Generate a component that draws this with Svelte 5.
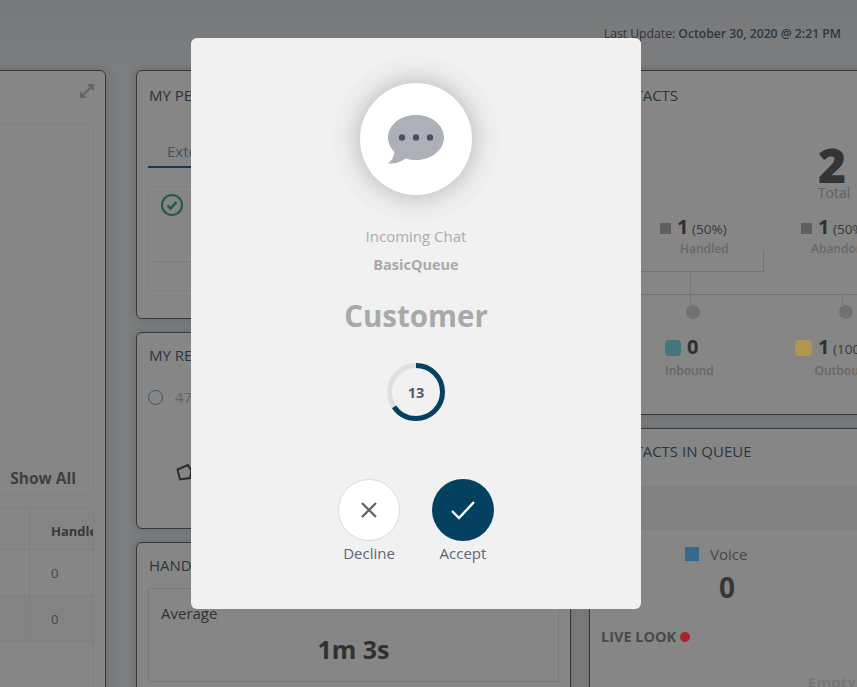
<script>
  const rows = [0, 0];
</script>

<div class="page">
  <header class="top"><span>Last Update: <b>October 30, 2020 @ 2:21 PM</b></span></header>
  <main class="grid">
    <section class="col">
      <div class="card wide">
        <svg class="expand" viewBox="0 0 14 14" width="14" height="14">
          <path d="M0 14V8L6 14ZM14 0V6L8 0Z M3 11L11 3" fill="#c0c0c0" stroke="#c0c0c0" stroke-width="1.800" />
        </svg>
        <div class="chart"><b class="showall">Show All</b></div>
        <div class="table">
          <div class="tr head"><div class="c1"></div><div class="c2">Handled</div></div>
          {#each rows as r, i}
            <div class="tr" class:alt={i === 1}><div class="c1"></div><div class="c2">{r}</div></div>
          {/each}
        </div>
      </div>
    </section>

    <section class="col">
      <div class="card perf">
        <h2>MY PERFORMANCE</h2>
        <div class="tabs"><span>Extensions</span></div>
        <div class="inner">
          <svg viewBox="0 0 24 24" width="24" height="24" class="ok">
            <circle cx="12" cy="12" r="10" fill="none" stroke="#46b08d" stroke-width="2.200" />
            <path d="M7.500 12.500l3 3 6-6.500" fill="none" stroke="#46b08d" stroke-width="2.600" />
          </svg>
          <div class="rule"></div>
        </div>
      </div>
      <div class="card recent">
        <h2>MY RECENT</h2>
        <div class="radio"><i></i><span>47</span></div>
        <svg class="penta" viewBox="0 0 16 17" width="16" height="17">
          <path d="M1.500 5.500L12 1L15.500 7L14 14L4 15.500Z" fill="none" stroke="#55504c" stroke-width="2" />
        </svg>
      </div>
      <div class="card handle">
        <h2>HANDLE TIME</h2>
        <div class="avg"><span>Average</span><b>1m 3s</b></div>
      </div>
    </section>

    <section class="col">
      <div class="card contacts">
        <h2>CONTACTS</h2>
        <div class="total"><b>2</b><span>Total</span></div>
        <div class="tree">
          <div class="stat s1"><div><i class="sq"></i><b>1</b> <em>(50%)</em></div><small>Handled</small></div>
          <div class="stat s2"><div><i class="sq"></i><b>1</b> <em>(50%)</em></div><small>Abandoned</small></div>
          <span class="ln l1"></span><span class="ln l2"></span><span class="ln l3"></span>
          <span class="ln l4"></span><span class="ln l5"></span>
          <span class="dot d1"></span><span class="dot d2"></span>
          <div class="stat s3"><div><i class="sq teal"></i><b>0</b></div><small>Inbound</small></div>
          <div class="stat s4"><div><i class="sq yellow"></i><b>1</b> <em>(100%)</em></div><small>Outbound</small></div>
        </div>
      </div>
      <div class="card queue">
        <h2>CONTACTS IN QUEUE</h2>
        <div class="band"></div>
        <div class="voice"><i></i><span>Voice</span></div>
        <b class="zero">0</b>
        <div class="live"><b>LIVE LOOK</b><i></i></div>
        <div class="liverule"></div>
        <b class="empty">Empty</b>
      </div>
    </section>
  </main>
</div>

<div class="overlay">
  <div class="modal">
    <div class="halo">
      <div class="disc">
        <svg viewBox="0 0 56 50" width="56" height="50">
          <path d="M28 0C43.500 0 56 10 56 22.500C56 35 43.500 45 28 45C24.500 45 21 44.500 18 43.500C13 47 7 49 0 48.500C3.500 46 6 41.500 6.500 37C2.500 33 0 28 0 22.500C0 10 12.500 0 28 0Z" fill="#adb0b9" />
          <circle cx="14" cy="22.500" r="3.200" fill="#4b5165" />
          <circle cx="28" cy="22.500" r="3.200" fill="#4b5165" />
          <circle cx="42" cy="22.500" r="3.200" fill="#4b5165" />
        </svg>
      </div>
    </div>
    <p class="kind">Incoming Chat</p>
    <p class="queue-name">BasicQueue</p>
    <h1>Customer</h1>
    <div class="timer">
      <svg viewBox="0 0 58 58" width="58" height="58">
        <circle cx="29" cy="29" r="26.500" fill="none" stroke="#dfdfdf" stroke-width="5" />
        <circle cx="29" cy="29" r="26.500" fill="none" stroke="#04405f" stroke-width="5" pathLength="100" stroke-dasharray="65.500 100" transform="rotate(-90 29 29)" />
      </svg>
      <b>13</b>
    </div>
    <div class="actions">
      <div class="action">
        <button class="round decline" aria-label="Decline">
          <svg viewBox="0 0 18 18" width="18" height="18"><path d="M2 2L16 16M16 2L2 16" stroke="#5b6072" stroke-width="2.200" fill="none" /></svg>
        </button>
        <span>Decline</span>
      </div>
      <div class="action">
        <button class="round accept" aria-label="Accept">
          <svg viewBox="0 0 26 20" width="26" height="20"><path d="M2 11L9 18L24 2" stroke="#fff" stroke-width="2.400" fill="none" /></svg>
        </button>
        <span>Accept</span>
      </div>
    </div>
  </div>
</div>

<style>
  :global(body) {
    margin: 0;
    font-family: "Open Sans", "Noto Sans", sans-serif;
    background: #e6eaee;
    overflow: hidden;
  }
  .page {
    width: 857px;
    height: 687px;
    overflow: hidden;
    background: linear-gradient(#dfe3e7, #eceef0 70px);
  }
  .top {
    height: 70px;
    box-sizing: border-box;
    padding: 26px 16px 0 0;
    text-align: right;
    font-size: 12.200px;
    line-height: 16px;
    color: #5d6670;
  }
  .top b { font-weight: 600; }
  .grid {
    display: grid;
    grid-template-columns: 200px 435px 500px;
    margin-left: -94px;
    column-gap: 30px;
  }
  .grid .col:last-child { margin-left: -12px; }
  .col { display: flex; flex-direction: column; gap: 13px; }
  .card {
    position: relative;
    box-sizing: border-box;
    background: #fdfdfd;
    border: 1px solid #616c74;
    border-radius: 6px;
    box-shadow: 0 0 12px rgba(0, 0, 0, .18);
  }
  h2 {
    margin: 0;
    font-size: 15px;
    font-weight: 500;
    line-height: 18px;
    color: #50687b;
    padding: 15px 0 2px 12px;
  }
  .wide { height: 650px; padding: 52px 11px 0 0; }
  .expand { position: absolute; right: 11px; top: 13px; }
  .chart {
    height: 370px;
    border: 1px solid #f1f1f1;
    border-left: 0;
    position: relative;
  }
  .showall {
    position: absolute;
    right: 17px;
    bottom: 5px;
    font-size: 15.500px;
    line-height: 22px;
    color: #77777b;
  }
  .table { margin-top: 12px; border: 1px solid #f1f1f1; border-left: 0; height: 200px; overflow: hidden; }
  .tr { display: flex; height: 45px; border-bottom: 1px solid #eeeeee; font-size: 13px; color: #888; }
  .tr.head { height: 41px; background: #fbfbfb; font-weight: 700; color: #6a6a70; }
  .tr.alt { background: #f8f8f8; }
  .c1 { flex: none; width: 122px; border-right: 1px solid #eeeeee; }
  .c2 { padding: 14px 0 0 21px; overflow: hidden; white-space: nowrap; }

  .perf { height: 249px; padding: 0 11px; }
  .perf h2 { padding-left: 1px; }
  .tabs {
    margin-top: 25px;
    height: 35px;
    border-bottom: 2px solid #2f6b85;
    font-size: 15px;
    padding-left: 19px;
    line-height: 40px;
    color: #7d9ec9;
  }
  .inner {
    margin-top: 18px;
    height: 103px;
    border: 1px solid #f0f0f0;
    border-radius: 6px;
    position: relative;
  }
  .ok { position: absolute; left: 11px; top: 6px; }
  .rule { position: absolute; left: 4px; right: 4px; top: 74px; border-top: 1px solid #e8e8e8; }

  .recent { height: 197px; padding: 0 11px; }
  .recent h2 { padding-left: 1px; padding-top: 13px; }
  .radio { display: flex; align-items: center; gap: 12px; margin-top: 21px; color: #b9b9b9; font-size: 15px; }
  .radio i { width: 13px; height: 13px; border: 1.500px solid #6d9cd0; border-radius: 50%; }
  .penta { display: block; margin: 57px 0 0 28px; }

  .handle { height: 180px; padding: 0 11px; }
  .handle h2 { padding-left: 1px; padding-top: 13px; }
  .avg {
    margin-top: 12px;
    border: 1px solid #e6e6e6;
    height: 94px;
    box-sizing: border-box;
    padding: 13px 12px;
    font-size: 15px;
    line-height: 22px;
    color: #5f5f5f;
    display: flex;
    flex-direction: column;
    align-items: flex-start;
  }
  .avg b { align-self: center; font-size: 25px; line-height: 34px; margin-top: 8px; color: #5c5c5c; font-weight: 700; }

  .contacts { height: 345px; }
  .total { position: absolute; left: 189px; top: 74px; width: 110px; display: flex; flex-direction: column; align-items: center; }
  .total b { font-size: 48px; line-height: 40px; font-weight: 800; color: #626262; margin-left: -4px; }
  .total span { font-size: 14px; line-height: 16px; color: #b8b8b8; }
  .tree { position: absolute; inset: 0; }
  .stat { position: absolute; white-space: nowrap; font-size: 14px; color: #6d6d6d; line-height: 24px; }
  .stat b { font-size: 20px; font-weight: 700; color: #5c5c5c; }
  .stat em { font-style: normal; font-size: 13.500px; }
  .stat small { display: block; font-size: 12px; line-height: 16px; color: #c4c4c4; font-weight: 600; text-align: center; }
  .s1 small { padding-left: 20px; }
  .s2 small { padding-left: 10px; }
  .s4 small { padding-left: 18px; }
  .sq { display: inline-block; width: 11px; height: 11px; background: #b4b4b4; margin-right: 6px; }
  .sq.teal, .sq.yellow { position: relative; z-index: 2; height: 16px; border-radius: 4px; margin-right: 6px; vertical-align: -2px; }
  .sq.teal { width: 16px; background: #42787c; }
  .sq.yellow { width: 17px; background: #b29650; }
  .s1 { left: 70px; top: 144px; }
  .s2 { left: 211px; top: 144px; }
  .s3 { left: 75px; top: 264px; }
  .s4 { left: 205px; top: 264px; }
  .s3 small, .s4 small { margin-top: 2px; }
  .ln { position: absolute; background: #dcdcdc; }
  .l1 { left: 173px; top: 179px; width: 1px; height: 21px; }
  .l2 { left: 0; top: 200px; width: 174px; height: 1px; }
  .l3 { left: 100px; top: 200px; width: 1px; height: 34px; }
  .l4 { left: 0; top: 223px; width: 498px; height: 1px; }
  .l5 { left: 252px; top: 224px; width: 1px; height: 10px; }
  .dot { position: absolute; width: 14px; height: 14px; border-radius: 50%; background: #d6d6d6; top: 234px; }
  .d1 { left: 96px; }
  .d2 { left: 249px; }

  .queue { height: 300px; }
  .queue h2 { padding-top: 13px; }
  .band { margin-top: 24px; height: 44px; background: #f3f3f3; }
  .voice { position: absolute; left: 95px; top: 115px; display: flex; align-items: center; gap: 11px; font-size: 15px; line-height: 20px; color: #868686; }
  .voice i { position: relative; z-index: 2; width: 14px; height: 14px; background: #38698c; }
  .zero { position: absolute; left: 129px; top: 139px; font-size: 28px; line-height: 38px; color: #686868; }
  .live { position: absolute; left: 11px; top: 198px; display: flex; align-items: center; gap: 4px; font-size: 14.500px; line-height: 20px; color: #8b8b8b; }
  .live b { font-weight: 700; }
  .live i { position: relative; z-index: 2; width: 10px; height: 10px; border-radius: 50%; background: #a82428; }
  .liverule { position: absolute; left: 0; top: 228px; width: 113px; border-top: 1px solid #f4f4f4; }
  .empty { position: absolute; left: 218px; top: 243px; font-size: 15px; line-height: 20px; color: #e0e0e0; }

  .overlay { position: fixed; inset: 0; z-index: 1; background: rgba(0, 0, 0, .47); }
  .modal {
    position: absolute;
    left: 191px;
    top: 38px;
    width: 450px;
    height: 571px;
    z-index: 3;
    box-sizing: border-box;
    padding-top: 19px;
    background: #f1f1f1;
    border-radius: 6px;
    display: flex;
    flex-direction: column;
    align-items: center;
    color: #aaa;
  }
  .halo {
    width: 164px;
    height: 164px;
    box-sizing: border-box;
    border-radius: 50%;
    border: 3px solid #efefef;
    box-shadow: inset 0 0 0 1px #f0f0f0;
    display: flex;
    align-items: center;
    justify-content: center;
  }
  .disc {
    width: 112px;
    height: 112px;
    border-radius: 50%;
    background: #fff;
    box-shadow: 0 0 28px rgba(0, 0, 0, .28);
    display: flex;
    align-items: center;
    justify-content: center;
  }
  .disc svg { margin-top: 1px; }
  p { margin: 0; text-align: center; }
  .kind { margin-top: 5px; font-size: 15px; line-height: 20px; color: #adadad; }
  .queue-name { margin-top: 9px; font-size: 14.500px; line-height: 20px; font-weight: 700; color: #a9a9a9; }
  h1 { margin: 19px 0 0; font-size: 29.500px; line-height: 44px; font-weight: 700; color: #a9a9a9; }
  .timer { margin-top: 25px; position: relative; width: 58px; height: 58px; }
  .timer svg { display: block; }
  .timer b { position: absolute; inset: 0; display: flex; align-items: center; justify-content: center; font-size: 14.500px; font-weight: 700; color: #555c70; }
  .actions { margin-top: 58px; display: flex; gap: 32px; }
  .action { display: flex; flex-direction: column; align-items: center; width: 62px; }
  .action span { margin-top: 2px; font-size: 15px; line-height: 20px; color: #5f6577; }
  .round {
    width: 62px;
    height: 62px;
    padding: 0;
    border-radius: 50%;
    display: flex;
    align-items: center;
    justify-content: center;
    box-sizing: border-box;
  }
  .decline { background: #fff; border: 1px solid #dcdcdc; }
  .accept { background: #04405f; border: 0; }
</style>
